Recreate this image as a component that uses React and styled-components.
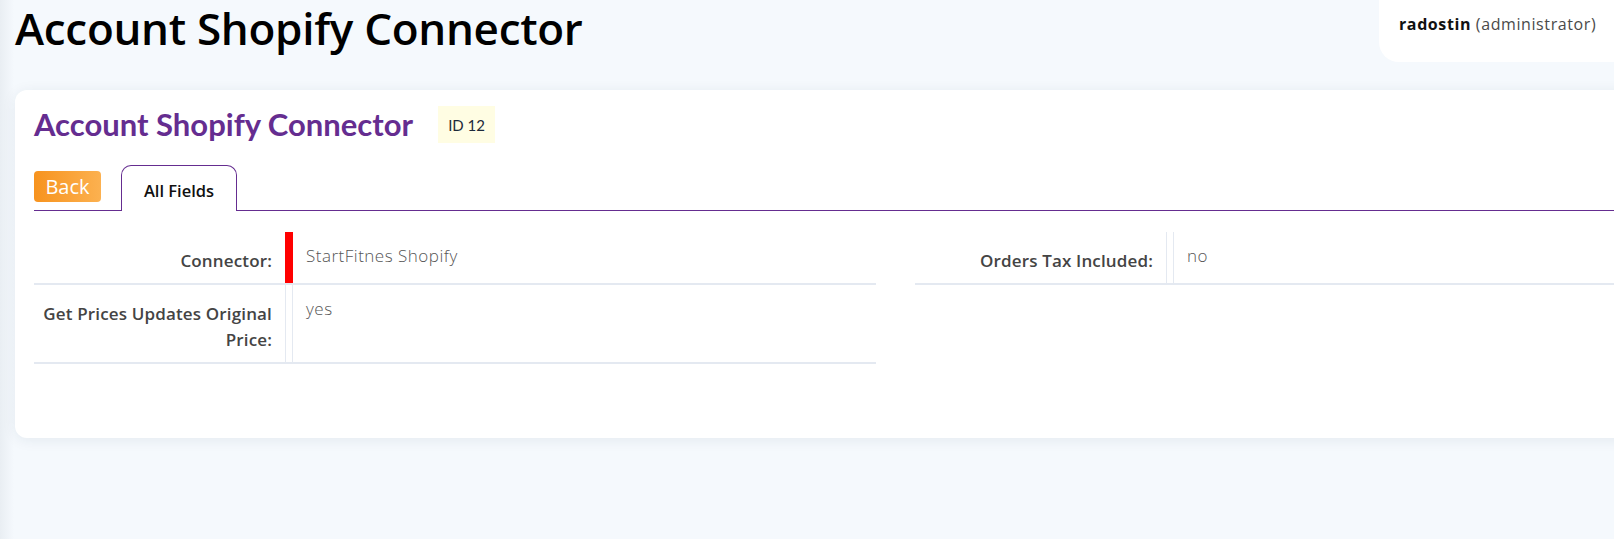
import React from "react";
import styled, { createGlobalStyle } from "styled-components";

const fields = [
  [
    { label: "Connector:", value: "StartFitnes Shopify", required: true },
    { label: "Get Prices Updates Original Price:", value: "yes" },
  ],
  [{ label: "Orders Tax Included:", value: "no" }],
];

const App = () => {
  return (
    <>
      <GlobalStyle />
      <Page>
        <Header>
          <PageTitle>Account Shopify Connector</PageTitle>
          <UserBox>
            <UserName>radostin</UserName> (administrator)
          </UserBox>
        </Header>

        <Card>
          <TitleRow>
            <CardTitle>Account Shopify Connector</CardTitle>
            <IdBadge>ID 12</IdBadge>
          </TitleRow>

          <TabBar>
            <BackButton type="button">Back</BackButton>
            <Tab>All Fields</Tab>
          </TabBar>

          <FieldGrid>
            {fields.map((column, i) => (
              <Column key={i}>
                {column.map((f) => (
                  <Row key={f.label}>
                    <Label>{f.label}</Label>
                    <Marker $required={f.required} />
                    <Value>{f.value}</Value>
                  </Row>
                ))}
              </Column>
            ))}
          </FieldGrid>
        </Card>
      </Page>
    </>
  );
};

export default App;

// Styled Components
const GlobalStyle = createGlobalStyle`
  html, body {
    margin: 0;
    padding: 0;
    overflow: hidden;
  }
  body {
    background: linear-gradient(90deg, #e9eef3 0px, #f5f9fd 14px);
    background-color: #f5f9fd;
    font-family: "Open Sans", "Lato", sans-serif;
    min-height: 100vh;
  }
`;

const Page = styled.div`
  width: 1776px;
  padding: 0 0 0 15px;
  min-height: 539px;
`;

const Header = styled.header`
  display: flex;
  justify-content: space-between;
  align-items: flex-start;
  height: 62px;
`;

const PageTitle = styled.h1`
  margin: 0;
  font-family: "Open Sans", "Noto Sans", sans-serif;
  font-weight: 600;
  font-size: 44px;
  line-height: 56px;
  color: #000;
  letter-spacing: -0.3px;
`;

const UserBox = styled.div`
  width: 412px;
  height: 62px;
  box-sizing: border-box;
  padding: 13px 20px 0;
  background: #fff;
  border-bottom-left-radius: 20px;
  font-size: 16px;
  color: #4a4a4a;
  letter-spacing: 0.6px;
`;

const UserName = styled.span`
  font-weight: 700;
  color: #111;
`;

const Card = styled.section`
  margin-top: 28px;
  background: #fff;
  border-radius: 12px;
  box-shadow: 0 2px 14px rgba(30, 50, 80, 0.08);
  padding: 16px 19px 74px;
`;

const TitleRow = styled.div`
  display: flex;
  align-items: center;
  gap: 25px;
  height: 37px;
`;

const CardTitle = styled.h2`
  margin: 0;
  font-family: "Lato", sans-serif;
  font-size: 31px;
  font-weight: 700;
  color: #652d90;
  line-height: 37px;
`;

const IdBadge = styled.span`
  display: inline-flex;
  align-items: center;
  justify-content: center;
  width: 57px;
  height: 37px;
  background: #fffde3;
  color: #1d2a3a;
  font-family: "Lato", sans-serif;
  font-size: 15px;
`;

const TabBar = styled.div`
  display: flex;
  align-items: flex-end;
  gap: 20px;
  margin-top: 22px;
  border-bottom: 1px solid #652d90;
`;

const BackButton = styled.button`
  width: 67px;
  height: 31px;
  margin-bottom: 8px;
  border: none;
  border-radius: 4px;
  background: linear-gradient(90deg, #f7931e, #fcb150);
  color: #fff;
  font-family: inherit;
  font-size: 20px;
  line-height: 31px;
  padding: 0;
  cursor: pointer;
`;

const Tab = styled.div`
  width: 116px;
  height: 46px;
  box-sizing: border-box;
  margin-bottom: -1px;
  border: 1px solid #652d90;
  border-bottom: none;
  border-radius: 10px 10px 0 0;
  background: #fff;
  display: flex;
  align-items: center;
  justify-content: center;
  padding-top: 4px;
  font-size: 16.5px;
  font-weight: 600;
  color: #111;
`;

const FieldGrid = styled.div`
  display: grid;
  grid-template-columns: 842px 842px;
  column-gap: 39px;
  margin-top: 21px;
  align-items: start;
`;

const Column = styled.div`
  display: flex;
  flex-direction: column;
`;

const Row = styled.div`
  display: grid;
  grid-template-columns: 251px 8px 1fr;
  border-bottom: 2px solid #e4e9f1;
`;

const Label = styled.div`
  text-align: right;
  padding: 16px 13px 9px 0;
  font-size: 17px;
  line-height: 26px;
  font-weight: 600;
  color: #444;
  letter-spacing: 0.15px;
`;

const Marker = styled.div`
  box-sizing: border-box;
  border-left: 1px solid ${(p) => (p.$required ? "#ff0000" : "#e4e9f1")};
  border-right: 1px solid ${(p) => (p.$required ? "#ff0000" : "#e4e9f1")};
  background: ${(p) => (p.$required ? "#ff0000" : "transparent")};
`;

const Value = styled.div`
  padding: 13px 13px;
  font-size: 17px;
  line-height: 22px;
  font-weight: 300;
  color: #555;
  letter-spacing: 0.5px;
`;
